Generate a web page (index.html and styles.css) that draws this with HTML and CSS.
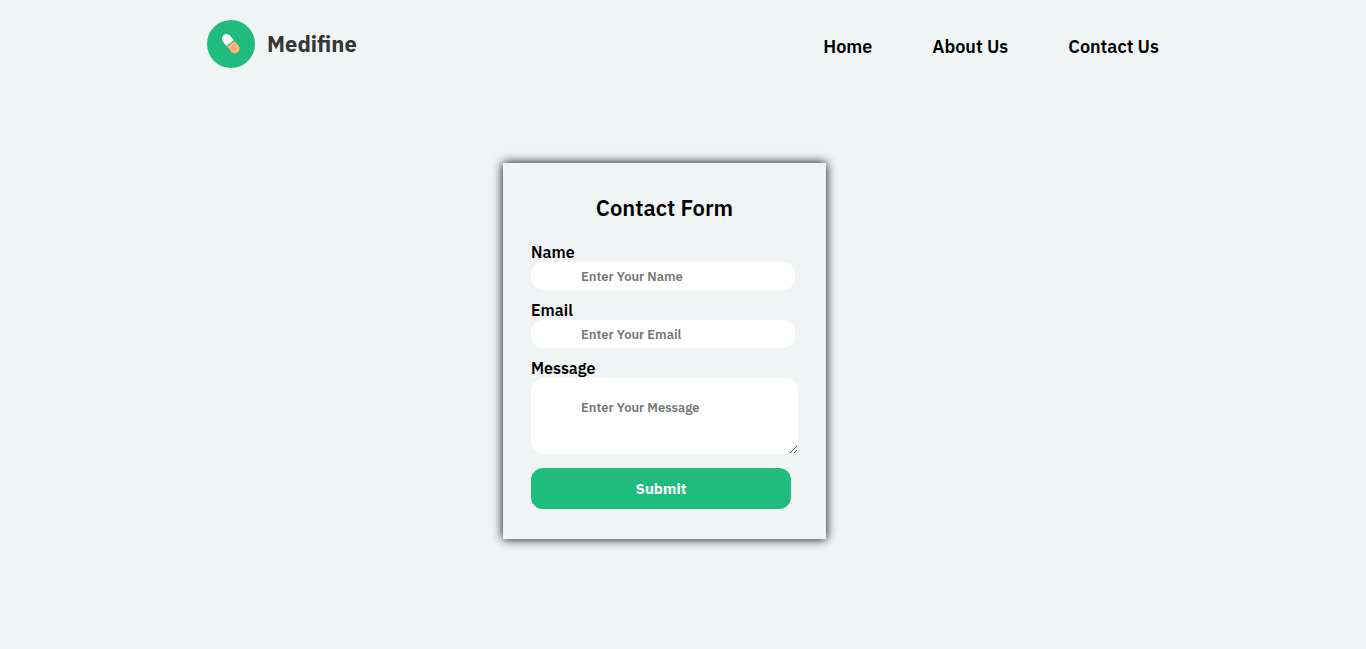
FILE: index.html
```html
<!DOCTYPE html>
<html lang="en">
<head>
  <meta charset="utf-8">
  <meta name="viewport" content="width=device-width, initial-scale=1">
  <title>Medifine</title>
  <link rel="stylesheet" href="styles.css">
</head>
<body>
  <header class="header">
    <a class="brand" href="#">
      <svg class="brand-mark" viewBox="0 0 48 48" aria-hidden="true">
        <circle cx="24" cy="24" r="24" fill="#20bc7e"/>
        <g transform="translate(23.8 23.8) rotate(-40)">
          <path d="M-4.7 -1V-6.5A4.7 4.7 0 0 1 4.7 -6.5V-1Z" fill="#fff"/>
          <path d="M-4.7 0H4.7V6.4A4.7 4.7 0 0 1 -4.7 6.4Z" fill="#ffb27d"/>
        </g>
      </svg>
      <span class="brand-name">Medifine</span>
    </a>
    <nav class="nav">
      <a href="#">Home</a>
      <a href="#">About Us</a>
      <a href="#">Contact Us</a>
    </nav>
  </header>
  <main class="main">
    <form class="card">
      <h1 class="title">Contact Form</h1>
      <div class="field">
        <label for="name">Name</label>
        <input class="input" id="name" type="text" placeholder="Enter Your Name">
      </div>
      <div class="field">
        <label for="email">Email</label>
        <input class="input" id="email" type="email" placeholder="Enter Your Email">
      </div>
      <div class="field">
        <label for="message">Message</label>
        <textarea class="message" id="message" placeholder="Enter Your Message"></textarea>
      </div>
      <button class="submit" type="submit">Submit</button>
    </form>
  </main>
</body>
</html>
```
FILE: styles.css
```css
* {
  box-sizing: border-box;
}

body {
  margin: 0;
  background: #f0f4f5;
  color: #000;
  font-family: "IBM Plex Sans", "Noto Sans", sans-serif;
  font-weight: 600;
}

.header {
  display: flex;
  justify-content: space-between;
  align-items: center;
  max-width: 952px;
  margin: 0 auto;
  padding-top: 20px;
}

.brand {
  display: flex;
  align-items: center;
  gap: 12px;
  color: #363636;
  text-decoration: none;
}

.brand-mark {
  width: 48px;
  height: 48px;
}

.brand-name {
  font-size: 22px;
  font-weight: 700;
  line-height: 28px;
}

.nav {
  display: flex;
  gap: 60px;
  padding-top: 6px;
}

.nav a {
  color: #000;
  font-size: 18px;
  line-height: 24px;
  text-decoration: none;
}

.main {
  display: flex;
  justify-content: center;
  padding: 95px 37px 40px 0;
}

.card {
  display: flex;
  flex-direction: column;
  align-items: flex-start;
  padding: 30px 28px;
  box-shadow: 0 0 10px #000;
  background: #f0f4f5;
}

.title {
  align-self: center;
  margin: 0 0 20px;
  font-size: 22px;
  font-weight: 600;
  line-height: 30px;
}

.field {
  display: flex;
  flex-direction: column;
  align-items: flex-start;
  margin-bottom: 11px;
  font-size: 16px;
  line-height: 19px;
}

.input,
.message {
  border: 0;
  border-radius: 12px;
  background: #fff;
  font: inherit;
  font-size: 13px;
}

.input {
  width: 264px;
  height: 28px;
  padding: 0 50px;
}

.message {
  width: 267px;
  height: 76px;
  padding: 20px 50px;
}

.input::placeholder,
.message::placeholder {
  color: #757575;
}

.submit {
  width: 260px;
  height: 41px;
  margin-top: 3px;
  border: 0;
  border-radius: 12px;
  background: #20bc7e;
  color: #fff;
  font: inherit;
  font-size: 15px;
  font-weight: 700;
}
```
